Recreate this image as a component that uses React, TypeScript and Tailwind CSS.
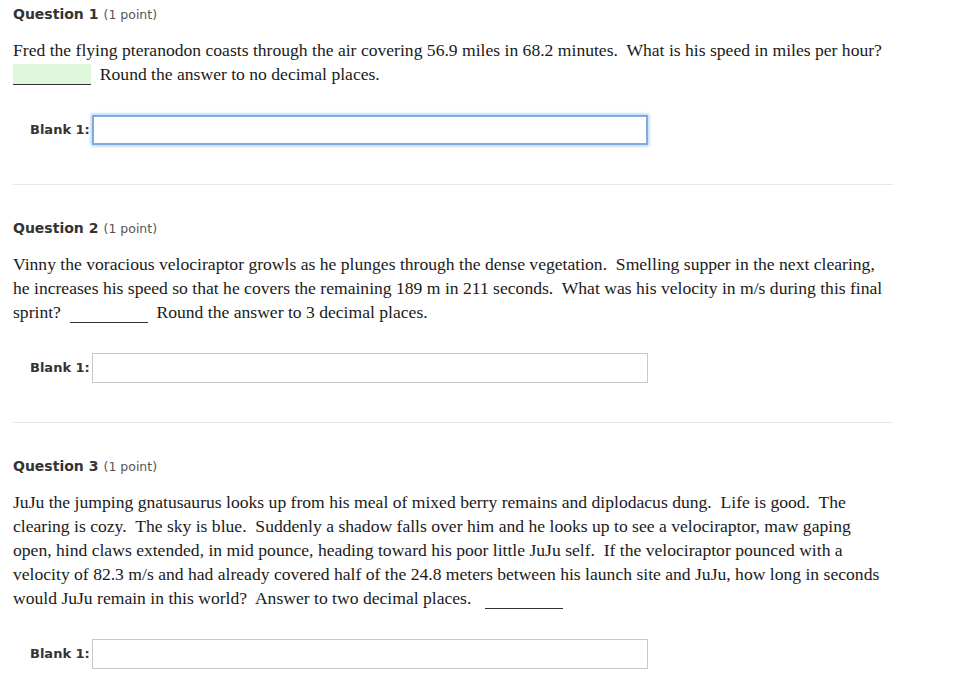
import React from "react";

interface Question {
  number: number;
  before: string;
  after: string;
  filled?: boolean;
  focused?: boolean;
}

const questions: Question[] = [
  {
    number: 1,
    before:
      "Fred the flying pteranodon coasts through the air covering 56.9 miles in 68.2 minutes.\u00a0 What is his speed in miles per hour?\u00a0 ",
    after: "\u00a0 Round the answer to no decimal places.",
    filled: true,
    focused: true,
  },
  {
    number: 2,
    before:
      "Vinny the voracious velociraptor growls as he plunges through the dense vegetation.\u00a0 Smelling supper in the next clearing, he increases his speed so that he covers the remaining 189 m in 211 seconds.\u00a0 What was his velocity in m/s during this final sprint?\u00a0 ",
    after: "\u00a0 Round the answer to 3 decimal places.",
  },
  {
    number: 3,
    before:
      "JuJu the jumping gnatusaurus looks up from his meal of mixed berry remains and diplodacus dung.\u00a0 Life is good.\u00a0 The clearing is cozy.\u00a0 The sky is blue.\u00a0 Suddenly a shadow falls over him and he looks up to see a velociraptor, maw gaping open, hind claws extended, in mid pounce, heading toward his poor little JuJu self.\u00a0 If the velociraptor pounced with a velocity of 82.3 m/s and had already covered half of the 24.8 meters between his launch site and JuJu, how long in seconds would JuJu remain in this world?\u00a0 Answer to two decimal places.\u00a0\u00a0 ",
    after: "",
  },
];

function QuestionBlock({ q, last }: { q: Question; last: boolean }) {
  return (
    <div className={last ? "" : "border-b border-[#e6e6e6] pb-[39px] mb-[33px]"}>
      {/* Header */}
      <div className="h-[20px] leading-[20px] text-[#333] font-['DejaVu_Sans',sans-serif]">
        <span className="text-[14px] font-bold">Question {q.number}</span>{" "}
        <span className="text-[12.5px] text-[#555]">(1 point)</span>
      </div>

      {/* Body */}
      <p className="mt-[14px] w-[874px] text-[17.6px] leading-[24px] text-[#1a1a1a] font-['Liberation_Serif',serif]">
        {q.before}
        <span
          className={
            "inline-block h-[21px] w-[78px] align-[-5px] border-b border-[#333] " +
            (q.filled ? "bg-[#e1f7dc]" : "")
          }
        />
        {q.after}
      </p>

      {/* Answer */}
      <div className="mt-[29px] flex items-center pl-[17px]">
        <label className="shrink-0 whitespace-nowrap text-[13px] font-bold text-[#333] font-['DejaVu_Sans',sans-serif]">
          Blank 1:
        </label>
        <input
          type="text"
          className={
            "ml-[2px] h-[30px] w-[556px] bg-white outline-none " +
            (q.focused
              ? "border-2 border-[#7eaae6] shadow-[0_0_3px_1px_rgba(110,160,230,0.55)]"
              : "border border-[#c8c8c8]")
          }
        />
      </div>
    </div>
  );
}

export default function App() {
  return (
    <div className="min-h-screen bg-white">
      <div className="w-[880px] ml-[13px] pt-[4px]">
        {questions.map((q, i) => (
          <QuestionBlock key={q.number} q={q} last={i === questions.length - 1} />
        ))}
      </div>
    </div>
  );
}
